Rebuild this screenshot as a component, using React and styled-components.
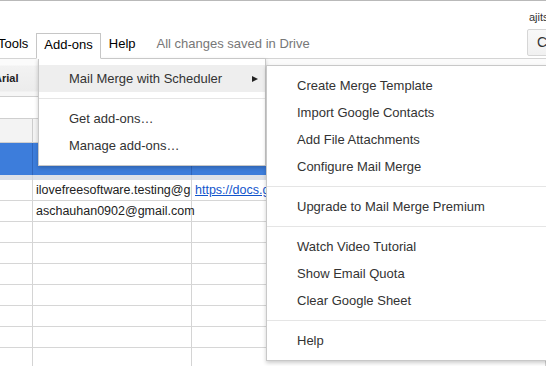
import React from "react";
import styled, { createGlobalStyle } from "styled-components";

const GlobalStyle = createGlobalStyle`
  body {
    margin: 0;
    font-family: "Liberation Sans", Arial, sans-serif;
    background: #fff;
  }
`;

const Page = styled.div`
  position: relative;
  width: 546px;
  height: 366px;
  overflow: hidden;
  background: #fff;
`;

const Header = styled.header`
  height: 58px;
  box-sizing: border-box;
  border-top: 1px solid #b9b9b9;
  display: flex;
  justify-content: space-between;
`;

const MenuBar = styled.nav`
  display: flex;
  align-items: flex-end;
  margin-left: -10px;
  font-size: 13px;
`;

const MenuTab = styled.div`
  position: relative;
  z-index: ${(p) => (p.$open ? 4 : 1)};
  height: 22px;
  line-height: 22px;
  padding: 0 7px 2px;
  margin-bottom: ${(p) => (p.$open ? "-1px" : "0")};
  border: 1px solid ${(p) => (p.$open ? "#c6c6c6" : "transparent")};
  border-bottom: ${(p) => (p.$open ? "1px solid #fff" : "1px solid transparent")};
  background: ${(p) => (p.$open ? "#fff" : "transparent")};
  color: #000;
`;

const SaveStatus = styled.span`
  height: 22px;
  line-height: 22px;
  padding: 0 0 3px 13px;
  color: #777;
`;

const Account = styled.div`
  width: 19px;
  padding-top: 10px;
  white-space: nowrap;
`;

const UserName = styled.div`
  font-size: 11px;
  line-height: 12px;
  color: #333;
  padding-left: 2px;
`;

const ShareButton = styled.div`
  margin-top: 6px;
  width: 40px;
  height: 27px;
  box-sizing: border-box;
  border: 1px solid #d6d6d6;
  border-radius: 2px;
  background: linear-gradient(#f8f8f8, #f1f1f1);
  font-size: 14px;
  line-height: 25px;
  padding-left: 9px;
  color: #333;
`;

const Toolbar = styled.div`
  height: 39px;
  box-sizing: border-box;
  border-top: 1px solid #d4d4d4;
  border-bottom: 1px solid #cfcfcf;
  background: linear-gradient(#fbfbfb 0, #fbfbfb 6px, #f2f2f2 7px, #ececec 32px, #f6f6f6 33px);
  display: flex;
  align-items: center;
`;

const FontSelect = styled.div`
  margin-left: -6px;
  font-size: 11px;
  font-weight: bold;
  color: #222;
`;

const FormulaBar = styled.div`
  height: 22px;
  box-sizing: border-box;
  border-bottom: 1px solid #cfcfcf;
`;

const Row = styled.div`
  display: grid;
  grid-template-columns: 33px 159px 1fr;
  height: ${(p) => p.$h}px;
  box-sizing: border-box;
  background: ${(p) => p.$bg || "#fff"};
  border-bottom: ${(p) => (p.$line ? `1px solid ${p.$line}` : "none")};
`;

const Cell = styled.div`
  position: relative;
  border-right: 1px solid ${(p) => p.$line || "#d4d4d4"};
  padding-left: 3px;
  font-size: 12.5px;
  line-height: 20px;
  color: #222;
  white-space: nowrap;
  overflow: ${(p) => (p.$clip ? "hidden" : "visible")};
`;

const Link = styled.a`
  color: #1155cc;
  text-decoration: underline;
`;

const Dropdown = styled.div`
  position: absolute;
  z-index: ${(p) => p.$z};
  top: ${(p) => p.$top}px;
  left: ${(p) => p.$left}px;
  width: ${(p) => p.$width}px;
  box-sizing: border-box;
  padding: 6px 0;
  background: #fff;
  border: 1px solid #c8c8c8;
  box-shadow: 0 2px 4px rgba(0, 0, 0, 0.2);
`;

const MenuItem = styled.div`
  height: 27px;
  display: flex;
  align-items: center;
  justify-content: space-between;
  padding: 0 7px 0 30px;
  font-size: 13px;
  color: #333;
  white-space: nowrap;
  background: ${(p) => (p.$hover ? "#eee" : "transparent")};
`;

const Arrow = styled.span`
  width: 0;
  height: 0;
  border-left: 6px solid #222;
  border-top: 3.5px solid transparent;
  border-bottom: 3.5px solid transparent;
`;

const Divider = styled.div`
  margin: 6px 0;
  border-top: 1px solid #e5e5e5;
`;

const dataRows = [
  ["ilovefreesoftware.testing@gmail.com", "https://docs.google.com"],
  ["aschauhan0902@gmail.com", ""],
  ["", ""],
  ["", ""],
  ["", ""],
  ["", ""],
  ["", ""],
  ["", ""],
  ["", ""],
];

const mergeMenu = [
  ["Create Merge Template", "Import Google Contacts", "Add File Attachments", "Configure Mail Merge"],
  ["Upgrade to Mail Merge Premium"],
  ["Watch Video Tutorial", "Show Email Quota", "Clear Google Sheet"],
  ["Help"],
];

const App = () => {
  return (
    <Page>
      <GlobalStyle />
      <Header>
        <MenuBar>
          <MenuTab>Tools</MenuTab>
          <MenuTab $open>Add-ons</MenuTab>
          <MenuTab>Help</MenuTab>
          <SaveStatus>All changes saved in Drive</SaveStatus>
        </MenuBar>
        <Account>
          <UserName>ajitsinghchauhan</UserName>
          <ShareButton>Comments</ShareButton>
        </Account>
      </Header>
      <Toolbar>
        <FontSelect>Arial</FontSelect>
      </Toolbar>
      <FormulaBar />
      <Row $h={24} $bg="#f3f3f3" $line="#cfcfcf">
        <Cell $line="#cccccc" />
        <Cell $line="#cccccc" />
        <Cell $line="#cccccc" />
      </Row>
      <Row $h={32} $bg="#3d7ddb">
        <Cell $line="#2f66bd" />
        <Cell $line="#2f66bd" />
        <Cell $line="#2f66bd" />
      </Row>
      <Row $h={5} $bg="#dde1e8">
        <Cell $line="#cfd3da" />
        <Cell $line="#cfd3da" />
        <Cell $line="#cfd3da" />
      </Row>
      {dataRows.map(([email, url], i) => (
        <Row key={i} $h={21} $line="#d6d6d6">
          <Cell />
          <Cell $clip={!!url}>{email}</Cell>
          <Cell $clip>{url && <Link>{url}</Link>}</Cell>
        </Row>
      ))}

      <Dropdown $z={3} $top={58} $left={38} $width={228}>
        <MenuItem $hover>
          Mail Merge with Scheduler
          <Arrow />
        </MenuItem>
        <Divider />
        <MenuItem>Get add-ons…</MenuItem>
        <MenuItem>Manage add-ons…</MenuItem>
      </Dropdown>

      <Dropdown $z={5} $top={65} $left={266} $width={300}>
        {mergeMenu.map((group, gi) => (
          <React.Fragment key={gi}>
            {gi > 0 && <Divider />}
            {group.map((label) => (
              <MenuItem key={label}>{label}</MenuItem>
            ))}
          </React.Fragment>
        ))}
      </Dropdown>
    </Page>
  );
};

export default App;
